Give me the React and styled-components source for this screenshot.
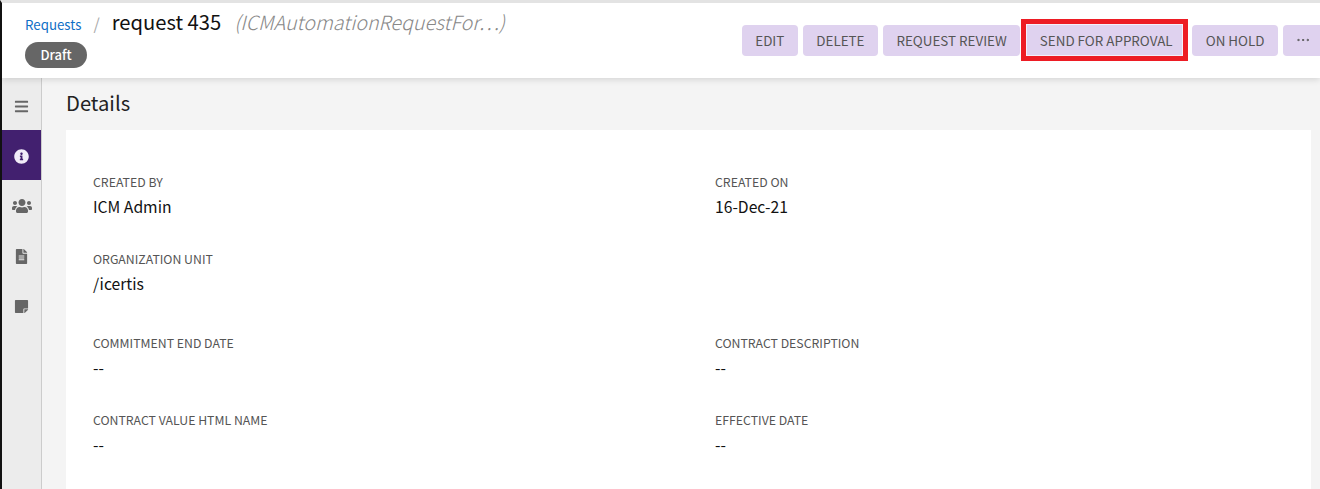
import React from 'react'
import styled, { createGlobalStyle } from 'styled-components'
import { FaBars, FaInfoCircle, FaUsers, FaFileAlt, FaStickyNote } from 'react-icons/fa'
import { Ellipsis } from 'lucide-react'

const fields = [
    [
        { label: 'CREATED BY', value: 'ICM Admin' },
        { label: 'CREATED ON', value: '16-Dec-21' },
    ],
    [
        { label: 'ORGANIZATION UNIT', value: '/icertis' },
    ],
    [
        { label: 'COMMITMENT END DATE', value: '--' },
        { label: 'CONTRACT DESCRIPTION', value: '--' },
    ],
    [
        { label: 'CONTRACT VALUE HTML NAME', value: '--' },
        { label: 'EFFECTIVE DATE', value: '--' },
    ],
]

const actions = ['EDIT', 'DELETE', 'REQUEST REVIEW', 'SEND FOR APPROVAL', 'ON HOLD']

function App() {
    return (
        <Page>
            <GlobalStyle />
            <Header>
                <TitleBlock>
                    <Crumbs>
                        <CrumbLink>Requests</CrumbLink>
                        <Slash>/</Slash>
                        <RequestName>request 435</RequestName>
                        <RequestType>(ICMAutomationRequestFor…)</RequestType>
                    </Crumbs>
                    <StatusPill>Draft</StatusPill>
                </TitleBlock>
                <Actions>
                    {actions.map(a => (
                        <ActionButton key={a} highlighted={a === 'SEND FOR APPROVAL'}>{a}</ActionButton>
                    ))}
                    <MoreButton><Ellipsis size={16} strokeWidth={1.5} /></MoreButton>
                </Actions>
            </Header>
            <Body>
                <Sidebar>
                    <SideItem><FaBars size={15} /></SideItem>
                    <SideItem active><FaInfoCircle size={15} /></SideItem>
                    <SideItem><FaUsers size={20} /></SideItem>
                    <SideItem><FaFileAlt size={15} /></SideItem>
                    <SideItem><FaStickyNote size={15} /></SideItem>
                </Sidebar>
                <Main>
                    <Heading>Details</Heading>
                    <Card>
                        {fields.map((row, i) => (
                            <FieldRow key={i} index={i}>
                                {row.map(f => (
                                    <Field key={f.label}>
                                        <Label>{f.label}</Label>
                                        <Value>{f.value}</Value>
                                    </Field>
                                ))}
                            </FieldRow>
                        ))}
                    </Card>
                </Main>
            </Body>
        </Page>
    )
}

export default App


const GlobalStyle = createGlobalStyle`
    html, body {
        margin: 0;
        height: 489px;
        overflow: hidden;
        background: #f4f4f4;
    }
    * {
        box-sizing: border-box;
    }
`

const Page = styled.div`
    width: 1320px;
    height: 489px;
    overflow: hidden;
    display: flex;
    flex-direction: column;
    font-family: "Noto Sans CJK SC", "Noto Sans", sans-serif;
    border-top: 3px solid #e3e3e3;
    border-left: 2px solid #111;
    background: #f4f4f4;
`

const Header = styled.header`
    height: 75px;
    flex-shrink: 0;
    display: flex;
    justify-content: space-between;
    background: #fff;
    box-shadow: 0 2px 6px rgba(0, 0, 0, 0.12);
    position: relative;
    z-index: 2;
`

const TitleBlock = styled.div`
    padding: 4px 0 0 23px;
`

const Crumbs = styled.div`
    display: flex;
    align-items: baseline;
    height: 33px;
`

const CrumbLink = styled.a`
    font-size: 13.3px;
    line-height: 30px;
    color: #0f6fc6;
`

const Slash = styled.span`
    font-size: 16px;
    color: #aaa;
    margin: 0 12px;
`

const RequestName = styled.span`
    font-size: 20.2px;
    line-height: 30px;
    color: #111;
`

const RequestType = styled.span`
    font-size: 19.7px;
    line-height: 30px;
    font-style: italic;
    font-weight: 300;
    color: #888;
    margin-left: 13px;
`

const StatusPill = styled.div`
    width: 62px;
    height: 26px;
    margin-top: 2px;
    border-radius: 13px;
    background: #666;
    color: #fff;
    font-size: 13px;
    line-height: 25px;
    font-weight: 500;
    text-align: center;
`

const Actions = styled.div`
    display: flex;
    flex-shrink: 0;
    gap: 5px;
    padding-top: 22px;
    margin-right: -40px;
    height: 53px;
`

const ActionButton = styled.button`
    height: 31px;
    padding: 0 13.5px;
    border: 0;
    border-radius: 4px;
    background: #dfd2ef;
    color: #555;
    font-family: inherit;
    font-size: 13.4px;
    line-height: 31px;
    white-space: nowrap;
    ${props => props.highlighted && `
        width: 167px;
        height: 42px;
        margin: -6px -1px 0 -4px;
        padding: 0 0 0 3px;
        border: 5px solid #ed1c24;
        border-radius: 0;
        box-shadow: inset 0 0 0 1px #f4f0fa;
        line-height: 32px;
    `}
`

const MoreButton = styled(ActionButton)`
    width: 77px;
    padding: 2px 0 0 12px;
    text-align: left;
`

const Body = styled.div`
    flex: 1;
    display: flex;
    min-height: 0;
`

const Sidebar = styled.nav`
    width: 40px;
    flex-shrink: 0;
    padding-top: 2px;
    background: #ececec;
    border-right: 1px solid #ccc;
`

const SideItem = styled.div`
    height: 50px;
    padding-top: 2px;
    display: flex;
    align-items: center;
    justify-content: center;
    color: ${props => props.active ? '#f1ecf8' : '#666'};
    background: ${props => props.active ? '#42206f' : 'transparent'};
`

const Main = styled.main`
    flex: 1;
    min-width: 0;
    padding: 0 9px 0 24px;
`

const Heading = styled.h2`
    margin: 0;
    height: 52px;
    font-size: 20.2px;
    font-weight: 400;
    line-height: 49px;
    color: #222;
`

const Card = styled.section`
    height: 400px;
    padding-top: 43px;
    background: #fff;
`

const FieldRow = styled.div`
    display: grid;
    grid-template-columns: 622px 1fr;
    padding-left: 27px;
    height: ${props => props.index === 1 ? 84 : 77}px;
`

const Field = styled.div`
    display: flex;
    flex-direction: column;
`

const Label = styled.div`
    font-size: 12.3px;
    line-height: 18px;
    color: #555;
`

const Value = styled.div`
    font-size: 15.7px;
    line-height: 26px;
    margin-top: 3px;
    color: #111;
`
